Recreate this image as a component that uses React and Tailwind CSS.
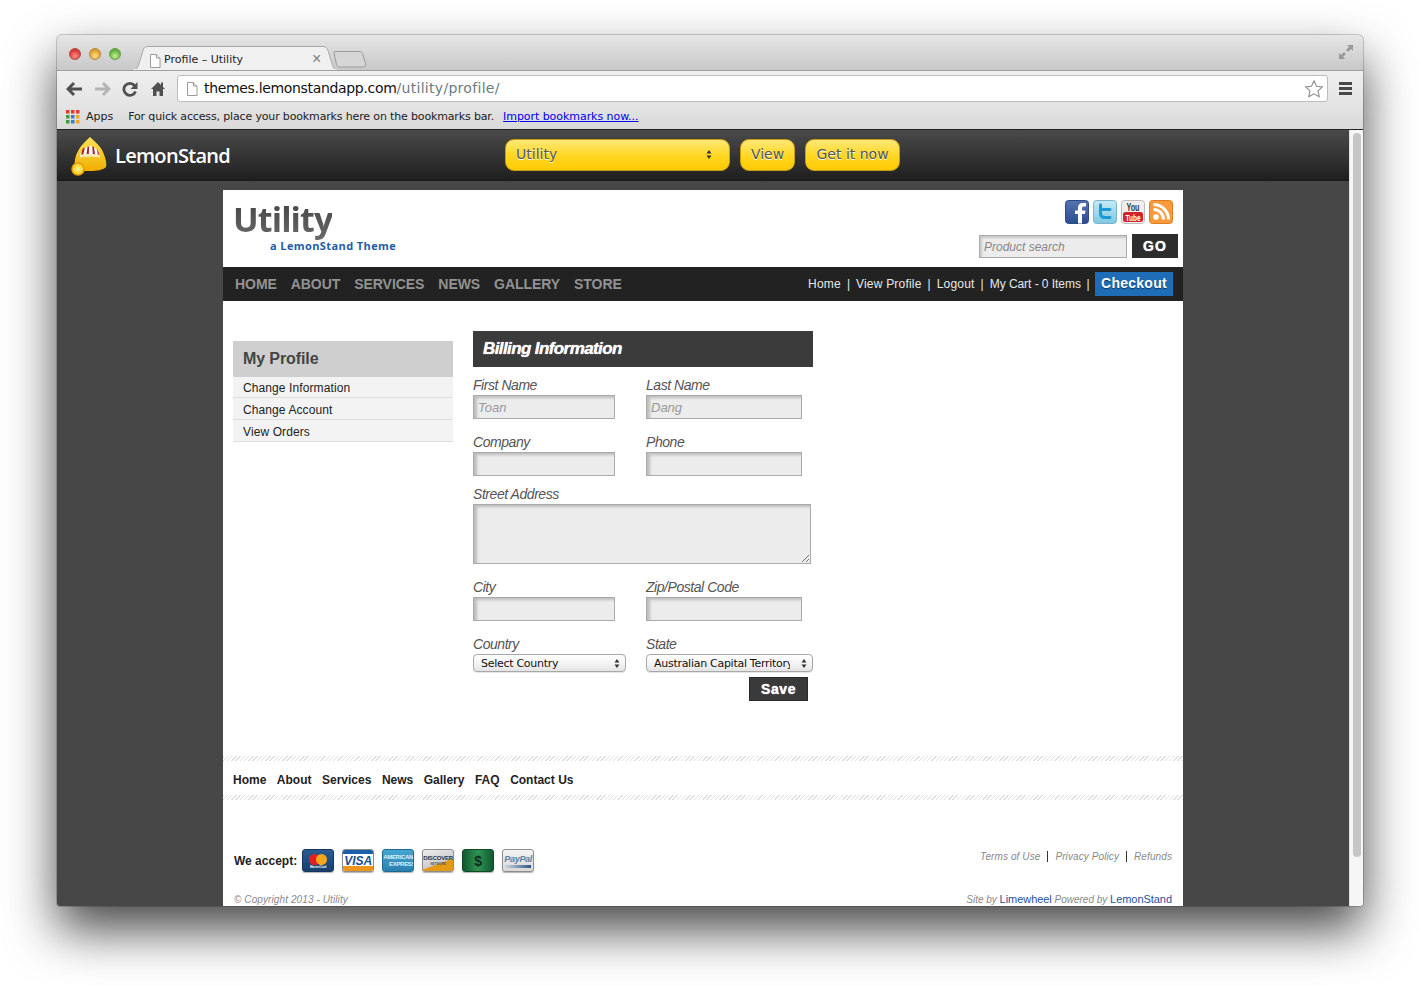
import React from "react";

const sans = "font-['Liberation_Sans',Arial,sans-serif]";
const lucida = "font-['DejaVu_Sans',sans-serif]";

function Lights() {
  return (
    <div className="flex gap-2 pt-[13px] pl-3">
      <div className="w-3 h-3 rounded-full border border-[#b04a48] bg-[radial-gradient(circle_at_50%_70%,#ff8f86,#d9342f_70%)]" />
      <div className="w-3 h-3 rounded-full border border-[#b9883a] bg-[radial-gradient(circle_at_50%_70%,#ffe08a,#db9a2a_70%)]" />
      <div className="w-3 h-3 rounded-full border border-[#6c9e4a] bg-[radial-gradient(circle_at_50%_70%,#c6f08e,#58ae3c_70%)]" />
    </div>
  );
}

function PageIcon({ className }) {
  return (
    <svg className={className} width="12" height="14" viewBox="0 0 12 14">
      <path d="M1.5.5h6l3.5 3.5v9.5H1.5z" fill="#fff" stroke="#9a9a9a" />
      <path d="M7.5.5V4H11" fill="#eee" stroke="#9a9a9a" />
    </svg>
  );
}

function Tab() {
  return (
    <div className="relative ml-[11px] mt-[11px] w-[206px] h-[24px] flex items-center pt-[5px]">
      <svg className="absolute inset-0" width="206" height="24" viewBox="0 0 206 24">
        <path d="M0 24c4 0 5.500-1.500 6.500-4.500L11 4.500C12 1.500 13.500.5 16 .5h175c2.500 0 4 1 5 4l4.500 15c1 3 2.500 4.500 5.500 4.500z" fill="#f0f0f0" stroke="#a9a9a9" />
        <path d="M1 24h204" stroke="#f0f0f0" strokeWidth="2" />
      </svg>
      <PageIcon className="relative ml-[17px]" />
      <span className={`relative ml-[3px] text-[11px] text-[#222] ${lucida}`}>Profile – Utility</span>
      <span className="absolute left-[180px] top-[3px] text-[16px] leading-[20px] text-[#808080] font-['Liberation_Sans']">×</span>
    </div>
  );
}

function NewTab() {
  return (
    <svg className="mt-[15px] -ml-[5px]" width="34" height="19" viewBox="0 0 34 19">
      <path d="M2 1.500h24c2 0 3 .5 3.500 2l3 10c.5 2-.5 3.500-2.500 3.500H7c-2 0-3-.5-3.500-2.500L1 3c-.3-1 0-1.500 1-1.500z" fill="#d6d6d6" stroke="#9a9a9a" />
    </svg>
  );
}

function Logo() {
  return (
    <svg width="40" height="40" viewBox="0 0 40 40">
      <defs>
        <linearGradient id="dome" x1="0" y1="0" x2="0" y2="1">
          <stop offset="0" stopColor="#ffe25a" />
          <stop offset="1" stopColor="#f0ae00" />
        </linearGradient>
      </defs>
      <path d="M21 1C25 5 31 9 34 16c2.500 6 4 11 3 15-3 3-9 4-16 4s-12-.5-15-3c-1-6 0-12 3-17C12 9 17 5 21 1z" fill="url(#dome)" />
      <path d="M11 19c1.500-5 5-8 10-9 5 1 8.500 4 10 9-6-1.300-14-1.300-20 0z" fill="#fff" />
      <path d="M13.500 13l-1.500 5.700 2.300-.3 1.700-7zM18.500 10.800l-1 7.200 2.300-.1.400-7.500zM23.200 10.500l.6 7.400 2.200.2-1-7zM28 13l-.2.1 1 5.500 2 .3z" fill="#a8262a" />
      <path d="M11 19c6-1.300 14-1.300 20 0v2.500c-6-1-14-1-20 0z" fill="#f5e9b8" />
      <circle cx="9" cy="33" r="6" fill="#ffd21f" stroke="#e89c00" strokeWidth="1.500" />
      <path d="M9 28v10M4 33h10M5.500 29.500l7 7M12.500 29.500l-7 7" stroke="#fff3a8" strokeWidth="1" />
    </svg>
  );
}

function TopButton({ children, className = "" }) {
  return (
    <div className={`h-[32px] rounded-[9px] border border-[#c99d12] bg-[linear-gradient(#ffe878,#ffd61f_55%,#ffcb05)] ${lucida} text-[14px] text-[#555] [text-shadow:0_1px_0_#fff] flex items-center pb-[2px] ${className}`}>
      {children}
    </div>
  );
}

function Updown({ className = "" }) {
  return (
    <svg className={className} width="6" height="9" viewBox="0 0 6 9">
      <path d="M3 0l2.500 3.500h-5zM3 9L.5 5.500h5z" fill="#333" />
    </svg>
  );
}

function Social() {
  return (
    <div className="flex gap-1">
      <svg width="24" height="24" viewBox="0 0 24 24">
        <defs>
          <linearGradient id="fb" x1="0" y1="0" x2="0" y2="1"><stop offset="0" stopColor="#5474b0" /><stop offset="1" stopColor="#2c4c92" /></linearGradient>
        </defs>
        <rect x=".5" y=".5" width="23" height="23" rx="3" fill="url(#fb)" stroke="#2d4a85" />
        <path d="M13 23.500V14h-3v-3.500h3V8c0-3.500 2-5 5-5h3v3.500h-2c-1.500 0-2 .5-2 2v2h3.500l-.5 3.500h-3v9.500z" fill="#fff" />
      </svg>
      <svg width="24" height="24" viewBox="0 0 24 24">
        <defs>
          <linearGradient id="tw" x1="0" y1="0" x2="0" y2="1"><stop offset="0" stopColor="#c5ebf5" /><stop offset="1" stopColor="#7ec8e2" /></linearGradient>
        </defs>
        <rect x=".5" y=".5" width="23" height="23" rx="3" fill="url(#tw)" stroke="#79b5cc" />
        <path d="M6 4.500c0-1.500 3-1.500 3 0V8h8c2 0 2 3 0 3H9v2c0 2 1 3 3 3h5c2 0 2 3 0 3h-5c-4 0-6-2-6-6z" fill="#1d9ad6" />
      </svg>
      <svg width="24" height="24" viewBox="0 0 24 24">
        <rect x=".5" y=".5" width="23" height="23" rx="3" fill="#eeeeee" stroke="#bbb" />
        <rect x="2" y="12" width="20" height="10" rx="2.500" fill="#d3232a" />
        <text x="12" y="10.500" textAnchor="middle" fontSize="10" fontWeight="700" fill="#333" fontFamily="Liberation Sans" textLength="13" lengthAdjust="spacingAndGlyphs">You</text>
        <text x="12" y="20.500" textAnchor="middle" fontSize="9" fontWeight="700" fill="#fff" fontFamily="Liberation Sans" textLength="15" lengthAdjust="spacingAndGlyphs">Tube</text>
      </svg>
      <svg width="24" height="24" viewBox="0 0 24 24">
        <rect x=".5" y=".5" width="23" height="23" rx="3" fill="#fb9a3c" stroke="#dd7d22" />
        <circle cx="7" cy="17" r="2.800" fill="#fff" />
        <path d="M4.500 9.500a10 10 0 0 1 10 10M4.500 4.500a15 15 0 0 1 15 15" fill="none" stroke="#fff" strokeWidth="3" />
      </svg>
    </div>
  );
}

const labelClass = "block h-[17px] leading-[15px] text-[14px] italic text-[#555] tracking-[-0.45px]";

function Field({ label, width, placeholder = "" }) {
  return (
    <div className={width}>
      <label className={labelClass}>{label}</label>
      <input
        readOnly
        placeholder={placeholder}
        className="block w-full h-[24px] pl-[4px] pr-[5px] pt-[1px] border border-[#aaa] bg-[#ececec] shadow-[inset_3px_2px_3px_rgba(0,0,0,0.2)] text-[13px] italic outline-none placeholder:text-[#999]"
      />
    </div>
  );
}

function SelectField({ label, value, width }) {
  return (
    <div className={width}>
      <label className={labelClass}>{label}</label>
      <div className={`h-[18px] rounded-[4px] border border-[#a8a8a8] bg-[linear-gradient(#fff,#f2f2f2_60%,#e4e4e4)] flex items-center justify-between pl-[7px] pr-[5px] pt-[2px] ${lucida} text-[11px] tracking-[-0.28px] text-[#111] shadow-[0_1px_0_rgba(0,0,0,0.1)]`}>
        <span className="overflow-hidden whitespace-nowrap w-[136px]">{value}</span>
        <Updown className="-mt-[2px]" />
      </div>
    </div>
  );
}

const cardBase = "w-8 h-[23px] rounded-[3px] overflow-hidden relative border shadow-[0_1px_1px_rgba(0,0,0,0.3)] flex flex-col items-center justify-center";

function Cards() {
  return (
    <div className="flex gap-2">
      <div className={`${cardBase} border-[#15365e] bg-[linear-gradient(#2a5c92,#16406f)]`}>
        <svg width="22" height="13" viewBox="0 0 22 13">
          <circle cx="7.500" cy="6.500" r="5.500" fill="#e2201f" />
          <circle cx="14.500" cy="6.500" r="5.500" fill="#f4a71d" />
        </svg>
        <span className="text-[3px] leading-[3px] text-white font-bold">MasterCard</span>
      </div>
      <div className={`${cardBase} border-[#8d8d8d] bg-white`}>
        <div className="absolute top-0 inset-x-0 h-[4px] bg-[#1a5fa8]" />
        <div className="absolute bottom-0 inset-x-0 h-[5px] bg-[#ee961c]" />
        <span className="text-[12px] leading-[12px] font-bold italic text-[#1a4f94]">VISA</span>
      </div>
      <div className={`${cardBase} border-[#1f6a92] bg-[linear-gradient(#45a5d2,#2c7fae)]`}>
        <span className="text-[6px] leading-[7px] text-[#dff2fb] font-bold tracking-[-0.3px]">AMERICAN</span>
        <span className="text-[6px] leading-[7px] text-[#dff2fb] font-bold tracking-[-0.3px] ml-2">EXPRESS</span>
      </div>
      <div className={`${cardBase} border-[#8d8d8d] bg-[linear-gradient(160deg,#eee,#ccc_60%,#e39a16_62%)]`}>
        <span className="text-[6px] leading-[7px] text-[#333] font-bold tracking-[-0.2px]">DISCOVER</span>
        <span className="text-[3px] leading-[5px] text-[#555] font-bold">NETWORK</span>
      </div>
      <div className={`${cardBase} border-[#0f4a25] bg-[linear-gradient(90deg,#11592e,#2f9456_50%,#11592e)]`}>
        <span className="text-[14px] leading-[14px] text-[#0a2d17] font-bold">$</span>
      </div>
      <div className={`${cardBase} border-[#8d8d8d] bg-[linear-gradient(#f4f4f4,#d8d8d8)]`}>
        <span className="text-[9px] leading-[11px] italic font-bold text-[#5a7fa8] -mt-[3px] tracking-[-0.3px]">PayPal</span>
        <div className="absolute bottom-[3px] left-[2px] right-[2px] h-[3px] bg-[linear-gradient(90deg,#ccd6e2,#2d5686)]" />
      </div>
    </div>
  );
}

const hatch = "h-[5px] bg-[repeating-linear-gradient(135deg,#e0e0e0_0,#e0e0e0_1px,#ffffff_1px,#ffffff_3px)]";

export default function App() {
  return (
    <div className="w-[1420px] h-[985px] bg-white overflow-hidden pt-[35px] pl-[57px]">
      <div className="w-[1306px] h-[871px] rounded-t-[5px] rounded-b-[3px] overflow-hidden shadow-[0_24px_50px_rgba(0,0,0,0.72),0_0_0_1px_rgba(0,0,0,0.18)] flex flex-col bg-[#d8d8d8]">
        {/* tab strip */}
        <div className="h-[36px] shrink-0 border-b border-[#a0a0a0] bg-[linear-gradient(#e6e6e6,#c8c8c8)] flex relative rounded-t-[5px]">
          <Lights />
          <Tab />
          <NewTab />
          <svg className="ml-auto mr-[9px] mt-[9px]" width="16" height="16" viewBox="0 0 16 16">
            <path d="M15 1v6l-2-2-3 3-2-2 3-3-2-2zM1 15V9l2 2 3-3 2 2-3 3 2 2z" fill="#9a9a9a" />
          </svg>
        </div>
        {/* toolbar */}
        <div className="h-[34px] shrink-0 pt-[1px] flex items-center bg-[linear-gradient(#efefef,#e4e4e4)]">
          <svg className="ml-[9px]" width="17" height="16" viewBox="0 0 17 16">
            <path d="M8 2L2 8l6 6M2 8h14" fill="none" stroke="#505050" strokeWidth="3" />
          </svg>
          <svg className="ml-[11px]" width="17" height="16" viewBox="0 0 17 16">
            <path d="M9 2l6 6-6 6M15 8H1" fill="none" stroke="#b4b4b4" strokeWidth="3" />
          </svg>
          <svg className="ml-[11px]" width="16" height="16" viewBox="0 0 16 16">
            <path d="M13.500 10.500a6 6 0 1 1-1-6" fill="none" stroke="#505050" strokeWidth="2.800" />
            <path d="M15.500 1v7h-7z" fill="#505050" />
          </svg>
          <svg className="ml-[13px]" width="14" height="15" viewBox="0 0 14 15">
            <path d="M7 1L0 8h2v7h3.500v-4.500h3V15H12V8h2l-2-2V1.500h-2v2.500z" fill="#505050" />
          </svg>
          <div className="ml-[12px] w-[1151px] h-[27px] rounded-[3px] border border-[#bdbdbd] bg-white flex items-center pl-[8px] pr-[3px]">
            <PageIcon />
            <span className={`ml-[6px] text-[14px] ${lucida} text-[#111] tracking-[-0.33px]`}>
              themes.lemonstandapp.com<span className="text-[#6a7a80] tracking-[0.3px]">/utility/profile/</span>
            </span>
            <svg className="ml-auto" width="20" height="20" viewBox="0 0 20 20">
              <path d="M10 1.800l2.500 5.400 5.900.7-4.400 4 1.200 5.800-5.200-2.900-5.200 2.900 1.200-5.800-4.400-4 5.900-.7z" fill="#fff" stroke="#8a8a8a" strokeWidth="1.100" />
            </svg>
          </div>
          <svg className="ml-[11px]" width="13" height="13" viewBox="0 0 13 13">
            <path d="M0 0h13v3H0zM0 5h13v3H0zM0 10h13v3H0z" fill="#484848" />
          </svg>
        </div>
        {/* bookmarks */}
        <div className={`h-[25px] shrink-0 flex items-center bg-[linear-gradient(#e4e4e4,#d9d9d9)] border-b border-[#222] ${lucida} text-[11px] text-[#222] pl-[9px]`}>
          <svg width="14" height="14" viewBox="0 0 14 14">
            <g>
              <rect x="0" y="0" width="3.500" height="3.500" fill="#e53a2f" />
              <rect x="5" y="0" width="3.500" height="3.500" fill="#e53a2f" />
              <rect x="10" y="0" width="3.500" height="3.500" fill="#e53a2f" />
              <rect x="0" y="5" width="3.500" height="3.500" fill="#3d9a46" />
              <rect x="5" y="5" width="3.500" height="3.500" fill="#3a7bd5" />
              <rect x="10" y="5" width="3.500" height="3.500" fill="#f2a51f" />
              <rect x="0" y="10" width="3.500" height="3.500" fill="#3d9a46" />
              <rect x="5" y="10" width="3.500" height="3.500" fill="#3a7bd5" />
              <rect x="10" y="10" width="3.500" height="3.500" fill="#f2a51f" />
            </g>
          </svg>
          <span className="ml-[6px]">Apps</span>
          <span className="ml-[15px] tracking-[-0.15px]">For quick access, place your bookmarks here on the bookmarks bar.</span>
          <a className="ml-[9px] text-[#0000ee] underline tracking-[-0.05px]">Import bookmarks now...</a>
        </div>
        {/* viewport */}
        <div className="flex-1 min-h-0 flex overflow-hidden">
          <div className={`flex-1 min-w-0 bg-[#474747] ${sans} overflow-hidden`}>
            {/* LemonStand bar */}
            <div className="h-[51px] border-b border-[#1a1a1a] bg-[linear-gradient(#4a4a4a,#1f1f1f)] flex">
              <div className="ml-[12px] mt-[6px]"><Logo /></div>
              <span className="ml-[6px] mt-[12px] text-[20px] leading-[28px] font-semibold text-white font-['Open_Sans'] tracking-[-0.7px]">LemonStand</span>
              <div className="ml-[275px] mt-[9px] flex gap-[10px]">
                <TopButton className="w-[225px] h-[31px] pl-[10px] pr-[17px] justify-between">
                  <span>Utility</span>
                  <Updown />
                </TopButton>
                <TopButton className="w-[55px] justify-center">View</TopButton>
                <TopButton className="w-[95px] justify-center">Get it now</TopButton>
              </div>
            </div>
            {/* page */}
            <div className="w-[960px] mx-auto mt-[9px] bg-white">
              <div className="h-[77px] flex justify-between">
                <div className="pl-[10px]">
                  <div className="pt-[7px] text-[34px] leading-[44px] font-bold font-['Open_Sans'] tracking-[-0.9px] bg-[linear-gradient(#3a3a3a,#6a6a6a)] bg-clip-text text-transparent w-fit">Utility</div>
                  <div className="ml-[37px] -mt-[2px] text-[11px] leading-[14px] font-bold font-['Open_Sans'] text-[#1f5ca8] tracking-[0.4px]">a LemonStand Theme</div>
                </div>
                <div className="flex flex-col items-end pt-[10px]">
                  <div className="mr-[10px]"><Social /></div>
                  <div className="mt-[10px] mr-[5px] flex gap-[5px]">
                    <input readOnly placeholder="Product search" className="w-[148px] h-[23px] mt-[1px] px-[4px] border border-[#aaa] bg-[#ececec] shadow-[inset_2px_2px_2px_rgba(0,0,0,0.15)] text-[12px] italic outline-none placeholder:text-[#888]" />
                    <div className="w-[46px] h-[24px] bg-[#2d2d2d] text-white text-[14px] font-bold tracking-[1px] [text-shadow:0_0_1px_#fff] flex items-center justify-center">GO</div>
                  </div>
                </div>
              </div>
              <div className="h-[34px] bg-[#222222] flex items-center justify-between pl-[12px] pr-[10px]">
                <div className="flex gap-[14px] text-[14px] font-bold text-[#929292] tracking-[-0.06px]">
                  <span>HOME</span><span>ABOUT</span><span>SERVICES</span><span>NEWS</span><span>GALLERY</span><span>STORE</span>
                </div>
                <div className="flex items-center text-[12px] text-[#e8e8e8]">
                  <span className="tracking-[0.2px]">Home</span><span className="mx-[6px]">|</span>
                  <span className="tracking-[0.2px]">View Profile</span><span className="mx-[6px]">|</span>
                  <span className="tracking-[0.2px]">Logout</span><span className="mx-[6px]">|</span>
                  <span className="tracking-[-0.05px]">My Cart - 0 Items</span><span className="mx-[5.500px]">|</span>
                  <div className="w-[78px] h-[24px] pb-[1px] bg-[#1f6cb7] text-white text-[14px] font-bold tracking-[0.25px] [text-shadow:0_1px_1px_#00000080] flex items-center justify-center">Checkout</div>
                </div>
              </div>
              {/* body */}
              <div className="flex pl-[10px] pt-[30px]">
                <div className="w-[220px] mt-[10px]">
                  <div className="h-[36px] bg-[#cfcfcf] pl-[10px] flex items-center text-[16px] font-bold text-[#444] tracking-[-0.1px]">My Profile</div>
                  <div>
                    {["Change Information", "Change Account", "View Orders"].map((t) => (
                      <div key={t} className="h-[22px] first:h-[21px] first:pt-[1px] bg-[#f3f3f3] border-b border-[#dedede] pl-[10px] pt-[2px] flex items-center text-[12px] text-[#222] tracking-[0.1px]">{t}</div>
                    ))}
                  </div>
                </div>
                <div className="w-[340px] ml-[20px]">
                  <div className="h-[36px] bg-[#3b3b3b] pl-[10px] flex items-center text-[17px] font-bold italic text-white tracking-[-0.6px] [text-shadow:0_0_1px_#fff]">Billing Information</div>
                  <div className="mt-[11px] flex">
                    <Field label="First Name" width="w-[142px]" placeholder="Toan" />
                    <div className="ml-[31px]"><Field label="Last Name" width="w-[156px]" placeholder="Dang" /></div>
                  </div>
                  <div className="mt-[16px] flex">
                    <Field label="Company" width="w-[142px]" />
                    <div className="ml-[31px]"><Field label="Phone" width="w-[156px]" /></div>
                  </div>
                  <div className="mt-[11px] w-[338px]">
                    <label className={labelClass}>Street Address</label>
                    <div className="relative h-[60px] border border-[#aaa] bg-[#ececec] shadow-[inset_3px_2px_3px_rgba(0,0,0,0.2)]">
                      <svg className="absolute right-0 bottom-0" width="9" height="9" viewBox="0 0 9 9">
                        <path d="M1 8l7-7M5 8l3-3" stroke="#777" strokeWidth="1" />
                      </svg>
                    </div>
                  </div>
                  <div className="mt-[16px] flex">
                    <Field label="City" width="w-[142px]" />
                    <div className="ml-[31px]"><Field label="Zip/Postal Code" width="w-[156px]" /></div>
                  </div>
                  <div className="mt-[16px] flex">
                    <SelectField label="Country" value="Select Country" width="w-[153px]" />
                    <div className="ml-[20px]"><SelectField label="State" value="Australian Capital Territory" width="w-[167px]" /></div>
                  </div>
                  <div className="mt-[5px] ml-[276px] w-[59px] h-[24px] bg-[#3a3a3a] border border-[#2a2a2a] text-white text-[14px] font-bold tracking-[0.6px] [text-shadow:0_0_1px_#fff] flex items-center justify-center">Save</div>
                </div>
              </div>
              {/* footer */}
              <div className={`mt-[55px] ${hatch}`} />
              <div className="h-[34px] pl-[10px] pt-[4px] flex items-center gap-[10.500px] text-[12px] font-bold text-[#222]">
                <span>Home</span><span>About</span><span>Services</span><span>News</span><span>Gallery</span><span>FAQ</span><span>Contact Us</span>
              </div>
              <div className={hatch} />
              <div className="flex justify-between pl-[11px] pr-[11px] pt-[49px] h-[130px]">
                <div>
                  <div className="flex items-center gap-[5px] text-[12px] font-bold text-[#222]">
                    <span>We accept:</span>
                    <Cards />
                  </div>
                  <div className="mt-[20px] text-[10px] italic text-[#888] tracking-[0.1px]">© Copyright 2013 - Utility</div>
                </div>
                <div className="flex flex-col items-end pt-[1px] text-[10px] italic text-[#888] tracking-[0.1px]">
                  <div className="flex items-center h-[12px]">
                    <span>Terms of Use</span>
                    <span className="mx-[7px] w-px h-[11px] bg-[#333]" />
                    <span>Privacy Policy</span>
                    <span className="mx-[7px] w-px h-[11px] bg-[#333]" />
                    <span>Refunds</span>
                  </div>
                  <div className="mt-[30px] leading-[14px] tracking-normal">
                    Site by <span className="not-italic text-[11px] text-[#1f4fa0] tracking-[-0.05px]">Limewheel</span> Powered by <span className="not-italic text-[11px] text-[#1f4fa0] tracking-[-0.05px]">LemonStand</span>
                  </div>
                </div>
              </div>
            </div>
          </div>
          {/* scrollbar */}
          <div className="w-[14px] shrink-0 bg-[#f6f6f6] border-l border-[#e0e0e0] pt-[3px] pl-[3px]">
            <div className="w-[8px] h-[724px] rounded-full bg-[#c6c6c6]" />
          </div>
        </div>
      </div>
    </div>
  );
}
